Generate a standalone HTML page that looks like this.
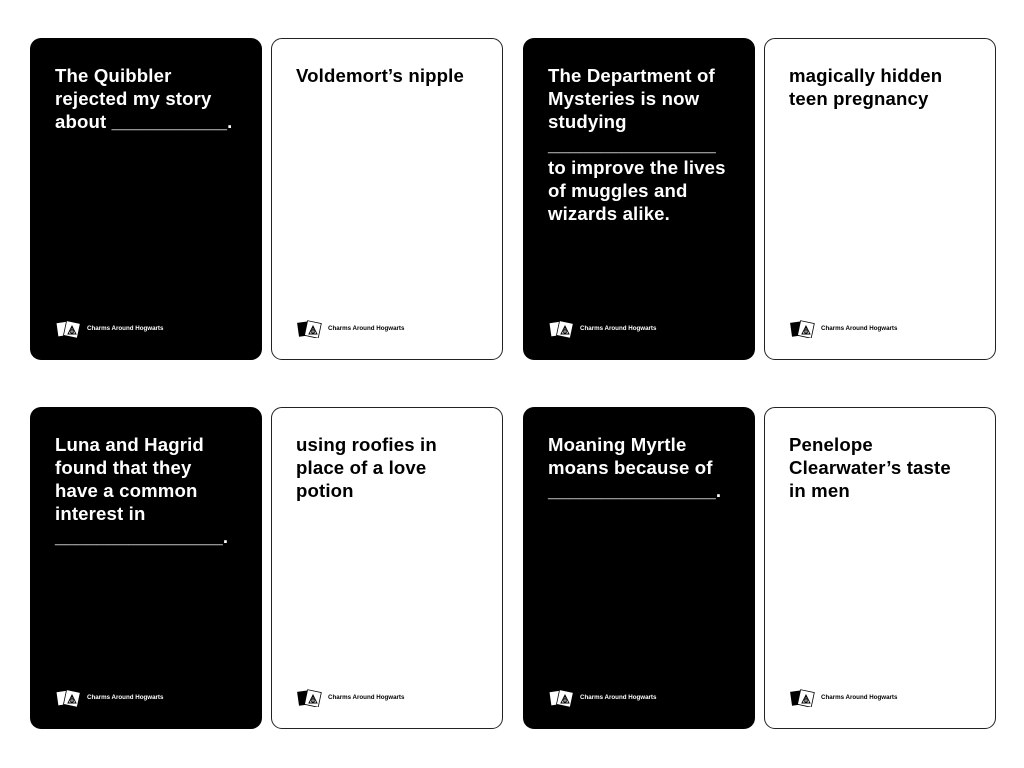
<!DOCTYPE html><html><head><style>
body{margin:0;width:1024px;height:768px;background:#fff;position:relative;font-family:"Liberation Sans",Arial,sans-serif;overflow:hidden}
.c{position:absolute;width:232px;height:322px;border-radius:11px;box-sizing:border-box}
.b{background:#000;color:#fff}
.w{background:#fff;color:#000;border:1px solid #222}
.t{position:absolute;left:25px;top:26px;font-weight:bold;font-size:18.6px;line-height:23px;width:200px;letter-spacing:0.15px;white-space:nowrap}
.w .t{left:24px;top:25px}
.l{position:absolute;left:26px;top:281px;display:flex;align-items:center;font-size:6.2px;font-weight:bold}
.w .l{left:25px;top:280px}
.l svg{margin-right:5px}
</style></head><body>
<div class="c b" style="left:30px;top:38px"><div class="t">The Quibbler<br>rejected my story<br>about ___________.</div><div class="l"><svg width="26" height="19" viewBox="0 0 26 19"><rect x="1" y="3" width="12" height="14" transform="rotate(-8 7 10)" fill="#fff" stroke="#000" stroke-width=".8"/><rect x="9" y="3" width="14" height="15" transform="rotate(12 16 10)" fill="#fff" stroke="#000" stroke-width=".8"/><path d="M12 15 L16 7 L20 15 Z M16 7 V15" fill="none" stroke="#000" stroke-width=".9"/><circle cx="16" cy="12.5" r="1.8" fill="none" stroke="#000" stroke-width=".8"/></svg>Charms Around Hogwarts</div></div>
<div class="c w" style="left:271px;top:38px"><div class="t">Voldemort’s nipple</div><div class="l"><svg width="26" height="19" viewBox="0 0 26 19"><rect x="1" y="3" width="12" height="14" transform="rotate(-8 7 10)" fill="#000"/><rect x="9" y="3" width="14" height="15" transform="rotate(12 16 10)" fill="#fff" stroke="#000" stroke-width=".8"/><path d="M12 15 L16 7 L20 15 Z M16 7 V15" fill="none" stroke="#000" stroke-width=".9"/><circle cx="16" cy="12.5" r="1.8" fill="none" stroke="#000" stroke-width=".8"/></svg>Charms Around Hogwarts</div></div>
<div class="c b" style="left:523px;top:38px"><div class="t">The Department of<br>Mysteries is now<br>studying<br>________________<br>to improve the lives<br>of muggles and<br>wizards alike.</div><div class="l"><svg width="26" height="19" viewBox="0 0 26 19"><rect x="1" y="3" width="12" height="14" transform="rotate(-8 7 10)" fill="#fff" stroke="#000" stroke-width=".8"/><rect x="9" y="3" width="14" height="15" transform="rotate(12 16 10)" fill="#fff" stroke="#000" stroke-width=".8"/><path d="M12 15 L16 7 L20 15 Z M16 7 V15" fill="none" stroke="#000" stroke-width=".9"/><circle cx="16" cy="12.5" r="1.8" fill="none" stroke="#000" stroke-width=".8"/></svg>Charms Around Hogwarts</div></div>
<div class="c w" style="left:764px;top:38px"><div class="t">magically hidden<br>teen pregnancy</div><div class="l"><svg width="26" height="19" viewBox="0 0 26 19"><rect x="1" y="3" width="12" height="14" transform="rotate(-8 7 10)" fill="#000"/><rect x="9" y="3" width="14" height="15" transform="rotate(12 16 10)" fill="#fff" stroke="#000" stroke-width=".8"/><path d="M12 15 L16 7 L20 15 Z M16 7 V15" fill="none" stroke="#000" stroke-width=".9"/><circle cx="16" cy="12.5" r="1.8" fill="none" stroke="#000" stroke-width=".8"/></svg>Charms Around Hogwarts</div></div>
<div class="c b" style="left:30px;top:407px"><div class="t">Luna and Hagrid<br>found that they<br>have a common<br>interest in<br>________________.</div><div class="l"><svg width="26" height="19" viewBox="0 0 26 19"><rect x="1" y="3" width="12" height="14" transform="rotate(-8 7 10)" fill="#fff" stroke="#000" stroke-width=".8"/><rect x="9" y="3" width="14" height="15" transform="rotate(12 16 10)" fill="#fff" stroke="#000" stroke-width=".8"/><path d="M12 15 L16 7 L20 15 Z M16 7 V15" fill="none" stroke="#000" stroke-width=".9"/><circle cx="16" cy="12.5" r="1.8" fill="none" stroke="#000" stroke-width=".8"/></svg>Charms Around Hogwarts</div></div>
<div class="c w" style="left:271px;top:407px"><div class="t">using roofies in<br>place of a love<br>potion</div><div class="l"><svg width="26" height="19" viewBox="0 0 26 19"><rect x="1" y="3" width="12" height="14" transform="rotate(-8 7 10)" fill="#000"/><rect x="9" y="3" width="14" height="15" transform="rotate(12 16 10)" fill="#fff" stroke="#000" stroke-width=".8"/><path d="M12 15 L16 7 L20 15 Z M16 7 V15" fill="none" stroke="#000" stroke-width=".9"/><circle cx="16" cy="12.5" r="1.8" fill="none" stroke="#000" stroke-width=".8"/></svg>Charms Around Hogwarts</div></div>
<div class="c b" style="left:523px;top:407px"><div class="t">Moaning Myrtle<br>moans because of<br>________________.</div><div class="l"><svg width="26" height="19" viewBox="0 0 26 19"><rect x="1" y="3" width="12" height="14" transform="rotate(-8 7 10)" fill="#fff" stroke="#000" stroke-width=".8"/><rect x="9" y="3" width="14" height="15" transform="rotate(12 16 10)" fill="#fff" stroke="#000" stroke-width=".8"/><path d="M12 15 L16 7 L20 15 Z M16 7 V15" fill="none" stroke="#000" stroke-width=".9"/><circle cx="16" cy="12.5" r="1.8" fill="none" stroke="#000" stroke-width=".8"/></svg>Charms Around Hogwarts</div></div>
<div class="c w" style="left:764px;top:407px"><div class="t">Penelope<br>Clearwater’s taste<br>in men</div><div class="l"><svg width="26" height="19" viewBox="0 0 26 19"><rect x="1" y="3" width="12" height="14" transform="rotate(-8 7 10)" fill="#000"/><rect x="9" y="3" width="14" height="15" transform="rotate(12 16 10)" fill="#fff" stroke="#000" stroke-width=".8"/><path d="M12 15 L16 7 L20 15 Z M16 7 V15" fill="none" stroke="#000" stroke-width=".9"/><circle cx="16" cy="12.5" r="1.8" fill="none" stroke="#000" stroke-width=".8"/></svg>Charms Around Hogwarts</div></div>
</body></html>
